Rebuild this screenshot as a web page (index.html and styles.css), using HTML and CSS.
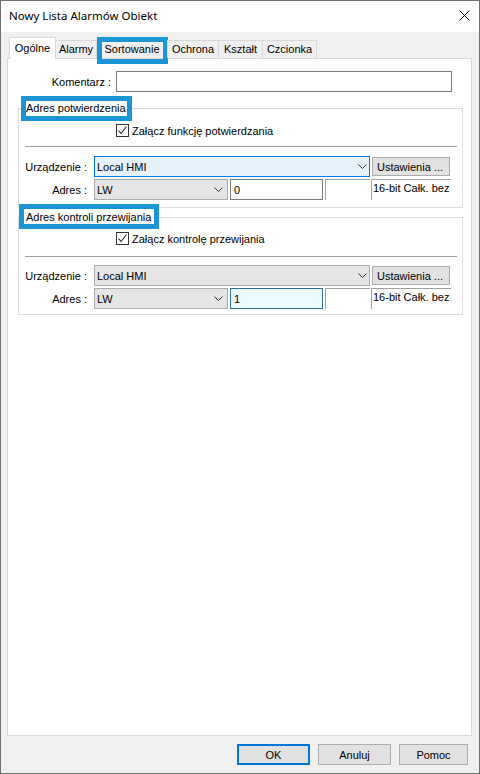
FILE: index.html
```
<!DOCTYPE html>
<html lang="pl">
<head>
<meta charset="utf-8">
<title>Nowy Lista Alarmów Obiekt</title>
<link rel="stylesheet" href="styles.css">
</head>
<body>
<div class="window">
  <div class="titlebar">
    <span class="title">Nowy Lista Alarmów Obiekt</span>
    <svg class="close" viewBox="0 0 11 11" aria-hidden="true"><path d="M0.5 0.5 L10.5 10.5 M10.5 0.5 L0.5 10.5" stroke="#000" stroke-width="1" fill="none"/></svg>
  </div>
  <div class="body">
    <div class="tabs">
      <div class="tab active w-ogolne">Ogólne</div>
      <div class="tab w-alarmy">Alarmy</div>
      <div class="tab w-sort marked">Sortowanie</div>
      <div class="tab w-ochrona">Ochrona</div>
      <div class="tab w-ksztalt">Kształt</div>
      <div class="tab w-czcionka last">Czcionka</div>
    </div>
    <div class="panel">
      <div class="comment-row">
        <span class="lbl-comment">Komentarz :</span>
        <div class="textbox comment"></div>
      </div>

      <fieldset class="group g1">
        <legend class="legend mark-l1">Adres potwierdzenia</legend>
        <div class="check-row">
          <span class="checkbox"><svg viewBox="0 0 13 13" aria-hidden="true"><polyline points="2.5,6.5 5,9.5 10.5,2.5" fill="none" stroke="#222" stroke-width="1.1"/></svg></span>
          <span class="check-label">Załącz funkcję potwierdzania</span>
        </div>
        <div class="sep"></div>
        <div class="row dev-row">
          <span class="lbl">Urządzenie :</span>
          <div class="combo focus wide"><span>Local HMI</span><svg class="arrow" viewBox="0 0 9 5" aria-hidden="true"><polyline points="0.5,0.5 4.5,4.5 8.5,0.5" fill="none" stroke="#333" stroke-width="1"/></svg></div>
          <div class="btn setbtn">Ustawienia ...</div>
        </div>
        <div class="row addr-row">
          <span class="lbl">Adres :</span>
          <div class="combo gray narrow"><span>LW</span><svg class="arrow" viewBox="0 0 9 5" aria-hidden="true"><polyline points="0.5,0.5 4.5,4.5 8.5,0.5" fill="none" stroke="#333" stroke-width="1"/></svg></div>
          <div class="textbox addr">0</div>
          <div class="blank"></div>
          <div class="static">16-bit Całk. bez</div>
        </div>
      </fieldset>

      <fieldset class="group g2">
        <legend class="legend mark-l2">Adres kontroli przewijania</legend>
        <div class="check-row">
          <span class="checkbox"><svg viewBox="0 0 13 13" aria-hidden="true"><polyline points="2.5,6.5 5,9.5 10.5,2.5" fill="none" stroke="#222" stroke-width="1.1"/></svg></span>
          <span class="check-label">Załącz kontrolę przewijania</span>
        </div>
        <div class="sep"></div>
        <div class="row dev-row">
          <span class="lbl">Urządzenie :</span>
          <div class="combo gray wide"><span>Local HMI</span><svg class="arrow" viewBox="0 0 9 5" aria-hidden="true"><polyline points="0.5,0.5 4.5,4.5 8.5,0.5" fill="none" stroke="#333" stroke-width="1"/></svg></div>
          <div class="btn setbtn">Ustawienia ...</div>
        </div>
        <div class="row addr-row">
          <span class="lbl">Adres :</span>
          <div class="combo gray narrow"><span>LW</span><svg class="arrow" viewBox="0 0 9 5" aria-hidden="true"><polyline points="0.5,0.5 4.5,4.5 8.5,0.5" fill="none" stroke="#333" stroke-width="1"/></svg></div>
          <div class="textbox addr focused">1</div>
          <div class="blank"></div>
          <div class="static">16-bit Całk. bez</div>
        </div>
      </fieldset>
    </div>
    <div class="footer">
      <div class="btn okbtn">OK</div>
      <div class="btn cancelbtn">Anuluj</div>
      <div class="btn helpbtn">Pomoc</div>
    </div>
  </div>
</div>
</body>
</html>
```
FILE: styles.css
```
* { box-sizing: border-box; }
html, body { margin: 0; padding: 0; }
body {
  font-family: "Liberation Sans", Arial, sans-serif;
  font-size: 11px;
  color: #000;
  background: #fff;
}
.window {
  width: 480px;
  height: 774px;
  border: 1px solid #707070;
  display: flex;
  flex-direction: column;
  background: #f0f0f0;
}
.titlebar {
  height: 31px;
  flex: none;
  background: #fff;
  display: flex;
  align-items: center;
  justify-content: space-between;
  padding-left: 8px;
}
.title {
  font-family: "Noto Sans", sans-serif;
  font-size: 11.5px;
  line-height: 14px;
  padding-bottom: 2px;
}
.close {
  width: 11px;
  height: 11px;
  margin-right: 9px;
  margin-bottom: 3px;
}
.body {
  flex: 1;
  display: flex;
  flex-direction: column;
  padding: 5px 7px 0 6px;
}
.tabs {
  display: flex;
  align-items: flex-end;
  height: 22px;
  margin-bottom: -1px;
  padding-left: 2px;
  position: relative;
  z-index: 1;
}
.tab {
  height: 18px;
  margin-bottom: 1px;
  border-top: 1px solid #d9d9d9;
  border-left: 1px solid #d9d9d9;
  display: flex;
  align-items: center;
  justify-content: center;
  line-height: 13px;
  background: #f0f0f0;
  position: relative;
}
.tab.last { border-right: 1px solid #d9d9d9; }
.tab.active {
  height: 22px;
  margin-bottom: 0;
  background: #fff;
  border-right: 1px solid #d9d9d9;
  align-items: flex-start;
  padding-top: 4px;
}
.tab.active + .tab { border-left: none; }
.w-ogolne { width: 47px; }
.w-alarmy { width: 40px; }
.w-sort { width: 71px; }
.w-ochrona { width: 51px; }
.w-ksztalt { width: 44px; }
.w-czcionka { width: 55px; }

.marked::after {
  content: "";
  position: absolute;
  left: 0;
  right: -1px;
  top: -4px;
  bottom: -6px;
  border: 5px solid #1b95d3;
}

.panel {
  flex: 1;
  background: #fff;
  border: 1px solid #d9d9d9;
}
.comment-row {
  display: flex;
  align-items: center;
  margin-top: 12px;
}
.lbl-comment {
  width: 103px;
  text-align: right;
  margin-right: 5px;
}
.textbox {
  height: 21px;
  border: 1px solid #7a7a7a;
  background: #fff;
  display: flex;
  align-items: center;
  padding-left: 3px;
}
.comment { width: 336px; }

.group {
  margin: 9px 0 0 10px;
  width: 445px;
  padding: 0 0 7px 0;
  border: 1px solid #dcdcdc;
  min-width: 0;
}
.group.g2 {
  margin-top: 2px;
  padding-bottom: 5px;
}
.legend {
  margin-left: 6px;
  padding: 0 1px;
  line-height: 14px;
  height: 14px;
  position: relative;
}
.mark-l1::after {
  content: "";
  position: absolute;
  left: -4px;
  right: -5px;
  top: -5px;
  bottom: -6px;
  border: 5px solid #1b95d3;
}
.mark-l2::after {
  content: "";
  position: absolute;
  left: -6px;
  right: -7px;
  top: -6px;
  bottom: -5px;
  border: 5px solid #1b95d3;
}
.check-row {
  display: flex;
  align-items: center;
  height: 13px;
  margin-top: 9px;
  padding-left: 97px;
}
.g2 .check-row { margin-top: 8px; }
.checkbox {
  width: 13px;
  height: 13px;
  border: 1px solid #333;
  background: #fff;
  position: relative;
  flex: none;
}
.checkbox svg {
  position: absolute;
  left: -1px;
  top: -1px;
  width: 13px;
  height: 13px;
}
.check-label { margin-left: 3px; }
.sep {
  height: 1px;
  background: #a0a0a0;
  margin: 9px 5px 0 6px;
}
.g2 .sep { margin-top: 11px; }
.row {
  display: flex;
  align-items: center;
  height: 21px;
}
.dev-row { margin-top: 9px; }
.g2 .dev-row { margin-top: 8px; }
.addr-row { margin-top: 2px; }
.row .lbl {
  width: 68px;
  text-align: right;
  margin-right: 7px;
  flex: none;
}
.combo {
  height: 21px;
  border: 1px solid #acacac;
  display: flex;
  align-items: center;
  justify-content: space-between;
  padding: 0 2px 0 2px;
  flex: none;
}
.combo.focus {
  background: #e5f1fb;
  border-color: #0078d7;
}
.combo.gray { background: #e5e5e5; }
.combo.wide { width: 276px; }
.combo.narrow { width: 134px; }
.narrow .arrow { margin-right: 2px; }
.arrow {
  width: 9px;
  height: 5px;
}
.btn {
  height: 21px;
  border: 1px solid #adadad;
  background: #e1e1e1;
  display: flex;
  align-items: center;
  justify-content: center;
  flex: none;
}
.setbtn {
  width: 78px;
  height: 19px;
  margin-left: 2px;
  justify-content: flex-start;
  padding-left: 4px;
}
.addr {
  width: 93px;
  margin-left: 2px;
  flex: none;
}
.addr.focused {
  border-color: #2c6f9e;
  background: #ecfbff;
}
.blank {
  width: 45px;
  height: 21px;
  margin-left: 2px;
  border-top: 1px solid #a0a0a0;
  border-left: 1px solid #a0a0a0;
  flex: none;
}
.static {
  width: 80px;
  height: 21px;
  margin-left: 1px;
  border-top: 1px solid #a0a0a0;
  border-left: 1px solid #a0a0a0;
  padding: 2px 0 0 1px;
  flex: none;
  white-space: nowrap;
  overflow: hidden;
}
.footer {
  height: 37px;
  flex: none;
  display: flex;
  justify-content: flex-end;
  align-items: flex-start;
  gap: 8px;
  padding-top: 8px;
  padding-right: 4px;
}
.okbtn {
  width: 73px;
  border: 2px solid #0078d7;
}
.cancelbtn { width: 73px; }
.helpbtn { width: 69px; }
```
